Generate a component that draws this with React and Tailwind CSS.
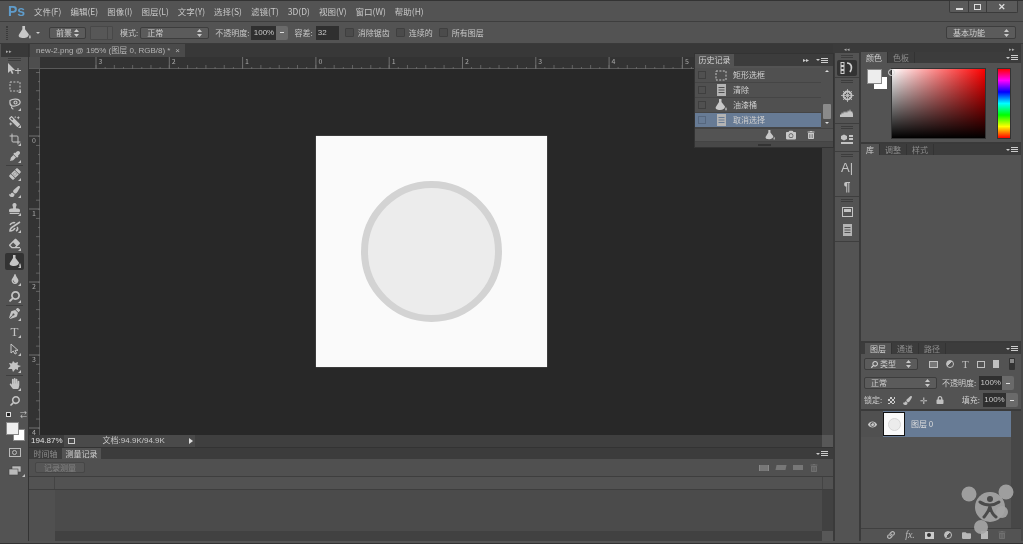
import React from 'react';
import {
  FaHandPaper, FaSearch, FaStamp, FaEyeDropper, FaPenNib, FaPaintBrush, FaEraser,
  FaMagic, FaBandAid, FaTint, FaCamera, FaTrashAlt, FaLock, FaEye, FaFolder, FaLink,
} from 'react-icons/fa';
import { Crop } from 'lucide-react';

const menus = ['文件(F)', '编辑(E)', '图像(I)', '图层(L)', '文字(Y)', '选择(S)', '滤镜(T)', '3D(D)', '视图(V)', '窗口(W)', '帮助(H)'];

const Chevrons = () => (
  <svg width="5" height="8" viewBox="0 0 5 8" className="ml-auto shrink-0 fill-[#c8c8c8]">
    <path d="M2.5 0 5 3H0zM2.5 8 0 5h5z" />
  </svg>
);

const Select = ({ label, className }) => (
  <div className={`flex items-center whitespace-nowrap rounded-[2px] border border-[#3d3d3d] bg-[#5b5b5b] px-1.5 text-[#cfcfcf] ${className}`}>
    {label}
    <Chevrons />
  </div>
);

const Percent = ({ value = '100%', className = 'w-[25px]' }) => (
  <div className="flex h-[14px] shrink-0 items-stretch">
    <div className={`flex items-center justify-center bg-[#2f2f2f] font-['Liberation_Sans',sans-serif] text-[8px] text-[#c8c8c8] ${className}`}>{value}</div>
    <div className="flex w-[12px] items-center justify-center rounded-r-[2px] bg-[#6a6a6a]">
      <div className="h-px w-[4px] bg-[#ddd]" />
    </div>
  </div>
);

const Check = ({ label, className = '' }) => (
  <div className={`flex items-center gap-[4px] whitespace-nowrap ${className}`}>
    <div className="h-[9px] w-[9px] rounded-[1px] border border-[#3f3f3f] bg-[#4b4b4b]" />
    <span>{label}</span>
  </div>
);

const Flyout = () => <div className="absolute bottom-[2px] right-[3px] h-0 w-0 border-b-[3px] border-l-[3px] border-b-[#c4c4c4] border-l-transparent" />;

const BucketIcon = ({ className = 'fill-[#c4c4c4]', size = 12 }) => (
  <svg width={size} height={size} viewBox="0 0 12 12" className={className}>
    <path d="M4 0h2.500v3L10 7.500C10 9.500 8 11 5 11S0 10 .8 8L4 3zM11 8c1 1.500 1 3.500 0 3.500S10 9.500 11 8z" />
  </svg>
);
const MoveIcon = () => (
  <svg width="15" height="12" viewBox="0 0 15 12" className="fill-[#c4c4c4]">
    <path d="M1 0v10l2.400-2.200L5 11l1.500-.7L5 7.200h3.200zM8 7h6v1H8zM10.500 5h1v6h-1z" />
  </svg>
);
const MarqueeIcon = () => (
  <svg width="12" height="11" viewBox="0 0 12 11" className="fill-none stroke-[#c4c4c4]">
    <rect x="1" y="1" width="10" height="9" strokeDasharray="2 1.4" />
  </svg>
);
const LassoIcon = () => (
  <svg width="12" height="12" viewBox="0 0 12 12" className="fill-none stroke-[#c4c4c4] stroke-[1.2]">
    <path d="M1 2.500C4 .5 10 .5 11 3.500S7 8.500 3.500 8 1 4.500 1 2.500zM3 8c-1 1.500 0 3 1.500 3" />
    <circle cx="6.500" cy="4.500" r="1.500" />
  </svg>
);
const HistoryBrushIcon = () => (
  <svg width="12" height="11" viewBox="0 0 12 11" className="fill-none stroke-[#c4c4c4] stroke-[1.6]">
    <path d="M11 1 5 5C3 6 1 8 1 10c2 0 4-1 5-3M1 4c1-2 4-3 5-2M8 6c1 1 1 3-1 4" />
  </svg>
);
const SelectionIcon = () => (
  <svg width="9" height="12" viewBox="0 0 9 12" className="fill-none stroke-[#c4c4c4]">
    <path d="M1 1v9l2.300-2L5 11l1.500-.7L5 7.300h3z" />
  </svg>
);
const ShapeIcon = () => (
  <svg width="13" height="11" viewBox="0 0 13 11" className="fill-[#c4c4c4]">
    <path d="M5 0 7 2 10 1 9.500 4 13 5 10 6.500 10 9 7.500 8 5 11 4 8 0 8 2.500 5 1 2 4 2.500z" />
  </svg>
);

const tools = [
  { icon: <MoveIcon /> },
  { icon: <MarqueeIcon />, more: true },
  { icon: <LassoIcon />, more: true },
  { icon: <FaMagic size={11} className="-scale-x-100 text-[#c4c4c4]" />, more: true },
  { icon: <Crop size={12} color="#c4c4c4" strokeWidth={2} />, more: true },
  { icon: <FaEyeDropper size={10} className="text-[#c4c4c4]" />, more: true, line: true },
  { icon: <FaBandAid size={12} className="-rotate-45 text-[#c4c4c4]" />, more: true },
  { icon: <FaPaintBrush size={11} className="text-[#c4c4c4]" />, more: true },
  { icon: <FaStamp size={11} className="text-[#c4c4c4]" />, more: true },
  { icon: <HistoryBrushIcon />, more: true },
  { icon: <FaEraser size={11} className="text-[#c4c4c4]" />, more: true },
  { icon: <BucketIcon />, more: true, active: true },
  { icon: <FaTint size={10} className="text-[#c4c4c4]" />, more: true },
  { icon: <FaSearch size={11} className="-scale-x-100 text-[#c4c4c4]" />, more: true, line: true },
  { icon: <FaPenNib size={11} className="text-[#c4c4c4]" />, more: true },
  { icon: <span className="font-['Liberation_Serif',serif] text-[13px] leading-none text-[#c4c4c4]">T</span>, more: true },
  { icon: <SelectionIcon />, more: true },
  { icon: <ShapeIcon />, more: true, line: true },
  { icon: <FaHandPaper size={11} className="text-[#c4c4c4]" />, more: true },
  { icon: <FaSearch size={10} className="-scale-x-100 text-[#c4c4c4]" /> },
];

const Toolbar = () => (
  <div className="flex w-[29px] shrink-0 flex-col border-r border-[#333] bg-[#535353] pl-[1px]">
    <div className="flex h-[13px] shrink-0 items-center bg-[#393939] pl-[5px] text-[5px] leading-none text-[#aaa]">▸▸</div>
    <div className="mx-[7px] -mb-[1px] mt-[1px] h-[3px] border-y border-[#3d3d3d]" />
    <div className="flex flex-col">
      {tools.map((tool, i) => (
        <React.Fragment key={i}>
          <div className={`relative mx-[4px] flex h-[17.5px] items-center justify-center rounded-[2px] ${tool.active ? 'bg-[#333]' : ''}`}>
            {tool.icon}
            {tool.more && <Flyout />}
          </div>
          {tool.line && <div className="mx-[5px] -mb-px h-px bg-[#3f3f3f]" />}
        </React.Fragment>
      ))}
    </div>
    <div className="relative h-[33px] shrink-0">
      <div className="absolute left-[5px] top-[2px] h-[5px] w-[5px] border border-[#ddd] bg-[#222]" />
      <div className="absolute left-[19px] top-[1px] text-[7px] leading-none text-[#ccc]">⇄</div>
      <div className="absolute left-[12px] top-[19px] h-[12px] w-[12px] border border-[#888] bg-white" />
      <div className="absolute left-[5px] top-[12px] h-[13px] w-[13px] border border-[#888] bg-[#efefef]" />
    </div>
    <div className="flex h-[18px] items-center justify-center">
      <div className="flex h-[9px] w-[12px] items-center justify-center border border-[#bbb]">
        <div className="h-[5px] w-[5px] rounded-full border border-[#bbb]" />
      </div>
    </div>
    <div className="relative flex h-[18px] items-center justify-center">
      <svg width="13" height="11" viewBox="0 0 13 11" className="fill-[#bbb] stroke-[#444] stroke-[0.6]">
        <rect x="4" y="1" width="9" height="6" />
        <rect x="1" y="4" width="9" height="6" />
      </svg>
      <Flyout />
    </div>
  </div>
);

const TopRuler = () => {
  const majors = [-3, -2, -1, 0, 1, 2, 3, 4, 5, 6];
  const ticks = Array.from({ length: 80 }, (_, i) => 56 + i * 9.16);
  return (
    <svg width="793" height="12" className="block">
      {ticks.map((x, i) => (
        <line key={i} x1={x} x2={x} y1={i % 2 ? 10 : 8} y2="12" stroke="#707070" strokeWidth="0.8" />
      ))}
      {majors.map((n, i) => (
        <g key={n}>
          <line x1={56 + i * 73.3} x2={56 + i * 73.3} y1="0" y2="12" stroke="#707070" />
          <text x={58.5 + i * 73.3} y="7" fontSize="7" fill="#a8a8a8">{Math.abs(n)}</text>
        </g>
      ))}
    </svg>
  );
};

const LeftRuler = () => {
  const ticks = Array.from({ length: 41 }, (_, i) => 3.5 + i * 9.12);
  return (
    <svg width="11" height="366" className="block">
      {ticks.map((y, i) => (
        <line key={i} x1={i % 2 ? 9 : 7} x2="11" y1={y} y2={y} stroke="#707070" strokeWidth="0.8" />
      ))}
      {[0, 1, 2, 3, 4].map((n) => (
        <g key={n}>
          <line x1="0" x2="11" y1={67 + n * 73} y2={67 + n * 73} stroke="#707070" />
          <text x="3" y={73.5 + n * 73} fontSize="7" fill="#a8a8a8">{n}</text>
        </g>
      ))}
    </svg>
  );
};

const DocIcon = () => (
  <svg width="11" height="12" viewBox="0 0 11 12" className="fill-[#b4b4b4]">
    <path d="M1 0h9v12H1zM2.5 3v1h6V3zm0 2.500v1h6v-1zm0 2.500v1h6V8z" fillRule="evenodd" />
  </svg>
);

const historyRows = [
  { label: '矩形选框', icon: <MarqueeIcon /> },
  { label: '清除', icon: <DocIcon /> },
  { label: '油漆桶', icon: <BucketIcon className="fill-[#c8c8c8]" /> },
  { label: '取消选择', icon: <DocIcon />, selected: true },
];

const PanelMenu = () => (
  <div className="flex items-center gap-[1px]">
    <div className="h-0 w-0 border-x-[2px] border-t-[2px] border-x-transparent border-t-[#ccc]" />
    <div className="flex h-[5px] w-[7px] flex-col justify-between">
      <div className="h-px bg-[#ccc]" />
      <div className="h-px bg-[#ccc]" />
      <div className="h-px bg-[#ccc]" />
    </div>
  </div>
);

const HistoryPanel = () => (
  <div className="absolute left-[665px] top-[9px] z-10 w-[140px] border border-[#333] bg-[#535353] text-[8px] text-[#cfcfcf]">
    <div className="flex h-[12px] items-stretch bg-[#3c3c3c]">
      <div className="flex w-[39px] items-center justify-center bg-[#535353]">历史记录</div>
      <div className="ml-auto mr-[5px] flex items-center gap-[7px]">
        <span className="text-[6px] leading-none text-[#ccc]">▸▸</span>
        <PanelMenu />
      </div>
    </div>
    <div className="flex">
      <div className="flex-1 pt-[2px]">
        {historyRows.map((row) => (
          <div key={row.label} className={`flex h-[15px] items-center border-b border-[#454545] ${row.selected ? 'bg-[#677b95]' : 'bg-[#505050]'}`}>
            <div className={`ml-[3px] h-[8px] w-[8px] border ${row.selected ? 'border-[#56677e]' : 'border-[#3f3f3f]'}`} />
            <div className="ml-[8px] flex w-[14px] justify-center">{row.icon}</div>
            <span className="ml-[5px]">{row.label}</span>
          </div>
        ))}
      </div>
      <div className="flex w-[12px] flex-col items-center justify-between bg-[#505050] py-[4px]">
        <div className="h-0 w-0 border-x-[2px] border-b-[2px] border-x-transparent border-b-[#ddd]" />
        <div className="mb-[3px] mt-auto h-[15px] w-[8px] rounded-[1px] bg-[#8a8a8a]" />
        <div className="h-0 w-0 border-x-[2px] border-t-[2px] border-x-transparent border-t-[#ddd]" />
      </div>
    </div>
    <div className="flex h-[14px] items-center justify-end gap-[11px] border-y border-[#444] pr-[18px] text-[#c8c8c8]">
      <BucketIcon size={10} className="fill-[#c8c8c8]" />
      <FaCamera size={10} />
      <FaTrashAlt size={8} />
    </div>
    <div className="flex h-[5px] items-center justify-center bg-[#484848]">
      <div className="h-[2px] w-[13px] bg-[#333]" />
    </div>
  </div>
);

const HistoryDockIcon = () => (
  <svg width="14" height="12" viewBox="0 0 14 12" className="fill-none stroke-[#d0d0d0]">
    <rect x="1" y="0.5" width="3" height="3" />
    <rect x="1" y="4.500" width="3" height="3" />
    <rect x="1" y="8.500" width="3" height="3" />
    <path d="M7 1c4 0 6 4 3 9" strokeWidth="1.600" />
  </svg>
);
const WheelIcon = () => (
  <svg width="13" height="13" viewBox="0 0 13 13" className="fill-none stroke-[#c4c4c4]">
    <circle cx="6.500" cy="6.500" r="4" strokeWidth="1.800" />
    <path d="M6.500 0v13M0 6.500h13M2 2l9 9M11 2l-9 9" strokeWidth="0.800" />
  </svg>
);
const HistogramIcon = () => (
  <svg width="14" height="8" viewBox="0 0 14 8" className="fill-[#c4c4c4]">
    <path d="M0 8V5l1 1 1-3 1 2 1-3 1 2 1-2 1 2 1-3 1 2 1-3 1 3 1-1 1 3v3z" />
  </svg>
);
const CubeDockIcon = () => (
  <svg width="14" height="13" viewBox="0 0 14 13" className="fill-[#c4c4c4]">
    <path d="M1 2 4 .5 7 2v3L4 6.500 1 5zM9 1h4v2H9zM9 4h4v2H9zM1 8h12v2H1z" />
  </svg>
);

const dockGroups = [
  { h: 'h-[25px]', items: [<span key="a" className="flex h-[16px] w-[20px] items-center justify-center rounded-[2px] bg-[#333]"><HistoryDockIcon /></span>] },
  { h: 'h-[46px]', items: [<WheelIcon key="b" />, <HistogramIcon key="c" />] },
  { h: 'h-[28px]', items: [<CubeDockIcon key="d" />] },
  { h: 'h-[45px]', items: [<span key="e" className="font-['Liberation_Sans',sans-serif] text-[13px] leading-none text-[#c4c4c4]">A|</span>, <span key="f" className="font-['Liberation_Sans',sans-serif] text-[12px] font-bold leading-none text-[#c4c4c4]">¶</span>] },
  { h: 'h-[45px]', items: [<div key="g" className="h-[10px] w-[11px] border border-[#c4c4c4] p-[1px]"><div className="h-[3px] bg-[#c4c4c4]" /></div>, <DocIcon key="h" />] },
];

const Dock = () => (
  <div className="flex w-[28px] shrink-0 flex-col border-x-2 border-[#3a3a3a] bg-[#535353]">
    <div className="flex h-[9px] shrink-0 items-center justify-center bg-[#3a3a3a] text-[5px] leading-none text-[#aaa]">◂◂</div>
    {dockGroups.map((group, i) => (
      <div key={i} className={`flex flex-col items-center border-b border-[#3e3e3e] ${group.h}`}>
        <div className="mt-[2px] h-[3px] w-[12px] border-y border-[#3d3d3d]" />
        <div className="flex flex-1 flex-col items-center justify-center gap-[7px]">{group.items}</div>
      </div>
    ))}
  </div>
);

const Tabs = ({ items, className = '' }) => (
  <div className={`flex h-[11px] shrink-0 items-stretch bg-[#3c3c3c] text-[8px] ${className}`}>
    {items.map((item, i) => (
      <div key={item} className={`flex items-center border-r border-[#333] px-[5px] ${i === 0 ? 'bg-[#535353] text-[#cfcfcf]' : 'text-[#8d8d8d]'}`}>{item}</div>
    ))}
    <div className="ml-auto mr-[3px] flex items-center"><PanelMenu /></div>
  </div>
);

const ColorPanel = () => (
  <div className="flex h-[92px] shrink-0 flex-col border-b-2 border-[#3a3a3a]">
    <Tabs items={['颜色', '色板']} />
    <div className="relative flex flex-1 pl-[6px] pt-[5px]">
      <div className="relative h-[24px] w-[24px] shrink-0">
        <div className="absolute left-[7px] top-[9px] h-[12px] w-[13px] bg-white" />
        <div className="absolute left-0 top-[1px] h-[15px] w-[15px] border border-[#8a8a8a] bg-[#ededed]" />
      </div>
      <div className="h-[71px] w-[95px] border border-[#333] bg-[linear-gradient(to_top,#000,transparent),linear-gradient(to_right,#fff,#ff0000)]" />
      <div className="ml-[11px] h-[71px] w-[14px] border border-[#333] bg-[linear-gradient(to_bottom,#f00,#f0f,#00f,#0ff,#0f0,#ff0,#f00)]" />
      <div className="absolute left-[27px] top-[6px] h-[7px] w-[7px] rounded-full border border-[#ddd]" />
    </div>
  </div>
);

const LayerFilterIcons = () => (
  <div className="ml-[11px] flex items-center gap-[8px] text-[#c0c0c0]">
    <div className="h-[7px] w-[9px] border border-[#c0c0c0] bg-[#777]" />
    <div className="h-[8px] w-[8px] rounded-full border border-[#c0c0c0] bg-[linear-gradient(135deg,#c0c0c0_50%,transparent_50%)]" />
    <span className="font-['Liberation_Serif',serif] text-[11px] leading-none">T</span>
    <div className="h-[7px] w-[8px] border border-[#c0c0c0]" />
    <div className="h-[8px] w-[6px] bg-[#c0c0c0]" />
    <div className="ml-[2px] flex h-[12px] w-[6px] flex-col rounded-[1px] bg-[#333] p-[1px]"><div className="h-[4px] bg-[#888]" /></div>
  </div>
);

const LayersPanel = () => (
  <div className="flex min-h-0 flex-1 flex-col">
    <Tabs items={['图层', '通道', '路径']} className="pl-[4px]" />
    <div className="flex h-[57px] shrink-0 flex-col border-b-2 border-[#3a3a3a] px-[3px] text-[8px] text-[#cfcfcf]">
      <div className="mt-[4px] flex items-center">
        <Select
          label={
            <span className="flex items-center gap-[2px]">
              <FaSearch size={7} className="-scale-x-100" />
              类型
            </span>
          }
          className="h-[12px] w-[54px]"
        />
        <LayerFilterIcons />
      </div>
      <div className="mt-[6px] flex items-center whitespace-nowrap">
        <Select label="正常" className="h-[12px] w-[73px]" />
        <span className="ml-[5px] mr-[3px]">不透明度:</span>
        <Percent className="w-[23px]" />
      </div>
      <div className="mt-[3px] flex items-center whitespace-nowrap">
        <span>锁定:</span>
        <div className="ml-[6px] flex items-center gap-[8px] text-[#c0c0c0]">
          <div className="h-[7px] w-[7px] bg-[conic-gradient(#ccc_25%,#555_0_50%,#ccc_0_75%,#555_0)] bg-[length:4px_4px]" />
          <FaPaintBrush size={9} />
          <span className="text-[9px] leading-none">✛</span>
          <FaLock size={8} />
        </div>
        <span className="ml-auto mr-[3px]">填充:</span>
        <Percent className="w-[23px]" />
      </div>
    </div>
    <div className="flex min-h-0 flex-1">
      <div className="flex-1">
        <div className="flex h-[26px] items-center bg-[#677b95] text-[8px] text-[#dcdcdc]">
          <div className="flex h-full w-[22px] items-center justify-center bg-[#505050]">
            <FaEye size={9} className="text-[#c8c8c8]" />
          </div>
          <div className="flex h-[24px] w-[22px] items-center justify-center border border-[#111] bg-[#fafafa]">
            <div className="h-[13px] w-[13px] rounded-full border border-[#d8d8d8] bg-[#ececec]" />
          </div>
          <span className="ml-[6px]">图层 0</span>
        </div>
      </div>
      <div className="w-[10px] bg-[#474747]" />
    </div>
    <div className="flex h-[13px] shrink-0 items-center justify-center gap-[10px] border-t border-[#404040] pl-[11px] text-[#b8b8b8]">
      <FaLink size={8} />
      <span className="font-['Liberation_Serif',serif] text-[10px] italic leading-none">fx.</span>
      <div className="flex h-[7px] w-[9px] items-center justify-center bg-[#ccc]"><div className="h-[4px] w-[4px] rounded-full bg-[#333]" /></div>
      <div className="h-[8px] w-[8px] rounded-full border border-[#c0c0c0] bg-[linear-gradient(135deg,#c0c0c0_50%,transparent_50%)]" />
      <FaFolder size={9} />
      <div className="h-[8px] w-[7px] bg-[#b8b8b8]" />
      <FaTrashAlt size={8} className="text-[#6f6f6f]" />
    </div>
  </div>
);

const Watermark = () => (
  <svg width="56" height="60" viewBox="0 0 56 60" className="absolute bottom-[3px] right-[5px] z-20">
    <g fill="#a5a5a5" fillOpacity="0.92">
      <circle cx="9" cy="16" r="7.500" />
      <circle cx="46" cy="14" r="7.500" />
      <circle cx="30" cy="29" r="15" />
      <circle cx="42" cy="34" r="6" />
      <circle cx="21" cy="49" r="7" />
    </g>
    <g fill="none" stroke="#4a4a4a" strokeWidth="3" strokeLinecap="round">
      <path d="M20 24c4 3 7 3 10 3s6-1 9-3M30 27c0 5-3 8-6 12M30 29c1 4 3 8 6 10" />
    </g>
    <circle cx="30" cy="21" r="3" fill="#4a4a4a" />
  </svg>
);

const App = () => {
  return (
    <div className="relative flex h-screen w-screen flex-col overflow-hidden border-y border-[#333] bg-[#535353] pb-[2px] font-['Noto_Sans_CJK_SC','Liberation_Sans',sans-serif] text-[8px] text-[#c8c8c8] blur-[0.35px]">
      {/* Menu bar */}
      <div className="flex h-[21px] shrink-0 items-center border-b border-[#3e3e3e] text-[8.5px]">
        <span className="ml-[8px] w-[26px] font-['Liberation_Sans',sans-serif] text-[14px] font-bold leading-none text-[#5f9ccb]">Ps</span>
        <div className="flex items-center gap-[9px]">
          {menus.map((m) => <span key={m}>{m}</span>)}
        </div>
        <div className="ml-auto mr-[5px] flex h-[12px] self-start rounded-b-[2px] border border-t-0 border-[#3a3a3a] bg-[#5a5a5a]">
          <div className="flex w-[19px] items-end justify-center border-r border-[#3a3a3a] pb-[2px]"><div className="h-[2px] w-[7px] bg-[#ddd]" /></div>
          <div className="flex w-[18px] items-center justify-center border-r border-[#3a3a3a]"><div className="h-[6px] w-[7px] border border-[#ddd]" /></div>
          <div className="flex w-[30px] items-center justify-center text-[9px] font-bold leading-none text-[#ddd]">✕</div>
        </div>
      </div>

      {/* Options bar */}
      <div className="flex h-[22px] shrink-0 items-center whitespace-nowrap border-b border-[#3a3a3a]">
        <div className="ml-[6px] h-[14px] w-[2px] border-x border-dotted border-[#3a3a3a]" />
        <BucketIcon size={13} className="ml-[10px] fill-[#c8c8c8]" />
        <div className="ml-[5px] h-0 w-0 border-x-[2px] border-t-[2px] border-x-transparent border-t-[#ccc]" />
        <Select label="前景" className="ml-[9px] h-[12px] w-[37px]" />
        <div className="ml-[4px] flex h-[14px] w-[23px] justify-end rounded-[1px] border border-[#484848] bg-[#575757]"><div className="w-[5px] border-l border-[#484848]" /></div>
        <span className="ml-[7px]">模式:</span>
        <Select label="正常" className="ml-[2px] h-[12px] w-[69px]" />
        <span className="ml-[6px] mr-[2px]">不透明度:</span>
        <Percent />
        <span className="ml-[6px]">容差:</span>
        <div className="ml-[3px] flex h-[14px] w-[23px] items-center bg-[#2f2f2f] pl-[2px] font-['Liberation_Sans',sans-serif] text-[8px]">32</div>
        <Check label="消除锯齿" className="ml-[6px]" />
        <Check label="连续的" className="ml-[6px]" />
        <Check label="所有图层" className="ml-[6px]" />
        <Select label="基本功能" className="ml-auto mr-[7px] h-[13px] w-[70px]" />
      </div>

      {/* Workspace */}
      <div className="relative flex min-h-0 flex-1">
        <Toolbar />

        <div className="relative flex w-[804px] shrink-0 flex-col bg-[#3a3a3a]">
          <HistoryPanel />
          <div className="flex h-[13px] shrink-0 items-end bg-[#383838]">
            <div className="ml-[1px] flex h-[13px] w-[155px] items-center whitespace-nowrap bg-[#4a4a4a] pl-[6px] font-['Liberation_Sans','Noto_Sans_CJK_SC',sans-serif] text-[8px] text-[#b4b4b4]">
              <span>new-2.png @ 195% (图层 0, RGB/8) *</span>
              <span className="ml-auto mr-[5px]">×</span>
            </div>
          </div>
          <div className="flex h-[12px] shrink-0 border-b border-[#5a5a5a] bg-[#333]">
            <div className="h-full w-[11px] shrink-0 bg-[#4e4e4e]" />
            <TopRuler />
          </div>
          <div className="flex h-[366px] shrink-0">
            <div className="w-[11px] shrink-0 border-r border-[#5a5a5a] bg-[#333]"><LeftRuler /></div>
            <div className="flex flex-1 items-center justify-center bg-[#282828] pb-[1px]">
              <div className="flex h-[231px] w-[231px] items-center justify-center bg-[#fafafa] shadow-[0_0_1px_#999]">
                <div className="h-[141px] w-[141px] rounded-full border-[7px] border-[#d3d3d3] bg-[#ececec]" />
              </div>
            </div>
            <div className="w-[11px] shrink-0 bg-[#434343]" />
          </div>
          <div className="flex h-[12px] shrink-0 items-stretch bg-[#3f3f3f]">
            <div className="flex w-[166px] items-center whitespace-nowrap bg-[#4a4a4a] font-['Liberation_Sans','Noto_Sans_CJK_SC',sans-serif] text-[8px]">
              <span className="flex h-full items-center bg-[#3c3c3c] pl-[2px] pr-[1px] text-[#e0e0e0]">194.87%</span>
              <div className="ml-[4px] h-[6px] w-[7px] border border-[#ccc]" />
              <span className="ml-[28px]">文档:94.9K/94.9K</span>
              <div className="ml-auto mr-[2px] h-0 w-0 border-y-[3px] border-l-[4px] border-y-transparent border-l-[#ddd]" />
            </div>
            <div className="ml-auto w-[11px] bg-[#575757]" />
          </div>
          <div className="flex min-h-0 flex-1 flex-col border-t border-[#333] bg-[#505050]">
            <div className="flex h-[11px] shrink-0 items-stretch bg-[#3c3c3c] text-[8px]">
              <div className="flex w-[33px] items-center justify-center text-[#8d8d8d]">时间轴</div>
              <div className="flex w-[39px] items-center justify-center bg-[#535353] text-[#cfcfcf]">测量记录</div>
              <div className="ml-auto mr-[5px] flex items-center"><PanelMenu /></div>
            </div>
            <div className="flex h-[18px] shrink-0 items-center border-b border-[#3e3e3e] pl-[6px] pr-[15px]">
              <div className="flex h-[11px] w-[50px] items-center justify-center rounded-[2px] border border-[#464646] bg-[#565656] text-[#848484]">记录测量</div>
              <div className="ml-auto flex items-center gap-[7px] text-[#8a8a8a]">
                <div className="h-[6px] w-[10px] border-x border-[#8a8a8a] bg-[#777]" />
                <div className="h-[5px] w-[10px] -skew-x-12 bg-[#777]" />
                <div className="h-[5px] w-[10px] bg-[#777]" />
                <FaTrashAlt size={8} className="text-[#6f6f6f]" />
              </div>
            </div>
            <div className="flex h-[13px] shrink-0 border-b border-[#3e3e3e] bg-[#525252]">
              <div className="w-[26px] border-r border-[#444]" />
              <div className="flex-1" />
              <div className="w-[11px] border-l border-[#444]" />
            </div>
            <div className="flex h-[41px] shrink-0">
              <div className="w-[26px] bg-[#505050]" />
              <div className="flex-1 bg-[#4b4b4b]" />
              <div className="w-[11px] bg-[#414141]" />
            </div>
            <div className="flex flex-1">
              <div className="w-[26px] bg-[#505050]" />
              <div className="flex-1 bg-[#414141]" />
              <div className="w-[11px] bg-[#575757]" />
            </div>
          </div>
        </div>

        <Dock />

        <div className="relative flex min-w-0 flex-1 flex-col border-r-2 border-[#484848] bg-[#535353]">
          <div className="flex h-[8px] shrink-0 items-center justify-end bg-[#3a3a3a] pr-[6px] text-[5px] leading-none text-[#aaa]">▸▸</div>
          <ColorPanel />
          <div className="flex h-[199px] shrink-0 flex-col border-b-2 border-[#3a3a3a]">
            <Tabs items={['库', '调整', '样式']} />
          </div>
          <LayersPanel />
          <Watermark />
        </div>
      </div>
    </div>
  );
};

export default App;
